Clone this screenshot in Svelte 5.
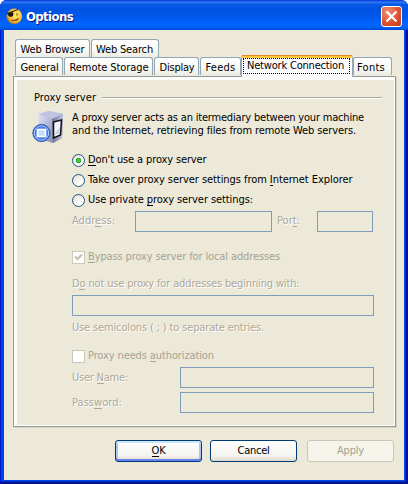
<script>
  // Tracks a label so that it fills the given number of pixels.
  function fit(node, width) {
    const natural = node.getBoundingClientRect().width;
    const count = node.textContent.length;
    node.style.letterSpacing = `${(width - natural) / count}px`;
  }

  const upperTabs = [
    { text: 'Web Browser', box: 75, w: 64 },
    { text: 'Web Search', box: 68, w: 57 }
  ];
  const lowerTabs = [
    { text: 'General', box: 48, w: 38 },
    { text: 'Remote Storage', box: 89, w: 79 },
    { text: 'Display', box: 45, w: 35 },
    { text: 'Feeds', box: 41, w: 30 },
    { text: 'Network Connection', box: 112, w: 97, active: true },
    { text: 'Fonts', box: 39, w: 28 }
  ];
  const modes = [
    { pre: '', key: 'D', post: "on't use a proxy server", w: 118.5, on: true },
    { pre: 'Take over proxy server settings from ', key: 'I', post: 'nternet Explorer', w: 264.5 },
    { pre: 'Use private ', key: 'p', post: 'roxy server settings:', w: 165 }
  ];
  const buttons = [
    { pre: '', key: 'O', post: 'K', w: 14, kind: 'default' },
    { pre: 'Cancel', key: '', post: '', w: 32, kind: '' },
    { pre: 'Apply', key: '', post: '', w: 27, kind: 'off' }
  ];
</script>

{#snippet label(pre, key, post, w)}
  <span class="t" use:fit={w}>{pre}{#if key}<u>{key}</u>{/if}{post}</span>
{/snippet}

<div class="window">
  <header>
    <svg class="logo" width="17" height="17" viewBox="0 0 17 17">
      <defs>
        <radialGradient id="gold" cx=".6" cy=".4" r=".65">
          <stop offset="0" stop-color="#ffe878" /><stop offset=".65" stop-color="#f9c03a" /><stop offset="1" stop-color="#b96a10" />
        </radialGradient>
      </defs>
      <circle cx="8.3" cy="8.3" r="7.8" fill="url(#gold)" />
      <path d="M1 5.500 12 1.500" stroke="#21180a" stroke-width="1" fill="none" />
      <path d="M1.500 5.500 6.500 4l1 1.500-.5 2.500-2 1-2.500-1z" fill="#21180a" />
      <path d="M11 5.500v2M5.500 12q4 1.500 7-1.500" stroke="#7a4708" stroke-width="1.2" fill="none" />
    </svg>
    <span class="title" use:fit={47}>Options</span>
    <button class="close" aria-label="Close">
      <svg width="21" height="21" viewBox="0 0 21 21"><path d="m5.500 5.500 10 10m0-10-10 10" stroke="#fff" stroke-width="2.2" /></svg>
    </button>
  </header>

  <main>
    <div class="tabs upper">
      {#each upperTabs as tab}
        <div class="tab" style:width="{tab.box}px">{@render label(tab.text, '', '', tab.w)}</div>
      {/each}
    </div>
    <div class="tabs lower">
      {#each lowerTabs as tab}
        <div class="tab" class:active={tab.active} style:width="{tab.box}px">{@render label(tab.text, '', '', tab.w)}</div>
      {/each}
    </div>

    <section class="panel">
      <div class="legend">{@render label('Proxy server', '', '', 62)}<i></i></div>
      <div class="intro">
        <svg width="33" height="33" viewBox="0 0 33 33">
          <defs>
            <linearGradient id="case" x1="0" x2="1" y2=".6"><stop stop-color="#e8eafa" /><stop offset="1" stop-color="#7c82a8" /></linearGradient>
            <linearGradient id="side" x1="0" x2="1"><stop stop-color="#6c7196" /><stop offset="1" stop-color="#c4c8de" /></linearGradient>
            <radialGradient id="ball"><stop stop-color="#86b4ff" /><stop offset=".8" stop-color="#3b72df" /><stop offset="1" stop-color="#2552b4" /></radialGradient>
          </defs>
          <path d="M6 3 17 0l14 3-1 24-9 5-14-4z" fill="url(#case)" />
          <path d="m6 3 11-3 14 3-11 5z" fill="#c1c4df" />
          <path d="m20 8 11-5-1 24-9 5z" fill="url(#side)" />
          <path d="m21.500 11 8-2-1 15-7 3z" fill="#f5f6fb" stroke="#15161e" stroke-width="1.6" />
          <path d="m22.500 24 5-8v6z" fill="#c7cad9" />
          <circle cx="9.500" cy="22" r="8.600" fill="url(#ball)" stroke="#2c5dbc" />
          <circle cx="9.500" cy="22" r="7.200" fill="none" stroke="#b9d3ff" />
          <path d="M5.500 18.500h8v7h-8z" fill="#c9dcfc" stroke="#fff" stroke-width="1.6" />
        </svg>
        <div>
          {@render label('A proxy server acts as an itermediary between your machine', '', '', 292)}
          {@render label('and the Internet, retrieving files from remote Web servers.', '', '', 284)}
        </div>
      </div>

      <div class="form">
        {#each modes as mode}
          <div class="choice">
            <span class="radio" class:on={mode.on}></span>
            {@render label(mode.pre, mode.key, mode.post, mode.w)}
          </div>
        {/each}
        <div class="row address">
          <div class="cap a">{@render label('Addr', 'e', 'ss:', 43)}</div><div class="input host"></div>
          <div class="cap p">{@render label('Por', 't', ':', 23)}</div><div class="input port"></div>
        </div>
        <div class="choice check bypass">
          <span class="box"><svg width="11" height="11" viewBox="0 0 11 11"><path d="M2 4.500 4.500 7 9 2.500" stroke="#c6c5b6" stroke-width="2.400" fill="none" /></svg></span>
          {@render label('', 'B', 'ypass proxy server for local addresses', 192)}
        </div>
        <div class="note">{@render label('D', 'o', ' not use proxy for addresses beginning with:', 227.5)}</div>
        <div class="input list"></div>
        <div class="note hint">{@render label('Use semicolons ( ; ) to separate entries.', '', '', 192)}</div>
        <div class="choice check auth">
          <span class="box"></span>
          {@render label('Proxy needs ', 'a', 'uthorization', 126)}
        </div>
        <div class="row"><div class="cap long">{@render label('User ', 'N', 'ame:', 56)}</div><div class="input cred"></div></div>
        <div class="row last"><div class="cap long">{@render label('Pass', 'w', 'ord:', 50)}</div><div class="input cred"></div></div>
      </div>
    </section>

    <footer>
      {#each buttons as b}
        <button class="btn {b.kind}">{@render label(b.pre, b.key, b.post, b.w)}</button>
      {/each}
    </footer>
  </main>
</div>

<style>
  :global(body) { background: #fff; }
  .window {
    box-sizing: border-box; width: 408px; height: 484px; padding: 0 4px 4px;
    border-radius: 7px 7px 0 0;
    background: #0046e6; box-shadow: inset 1px 0 #0019cf, inset -2px -2px #00138c, inset -3px -3px #0031cc;
    font: 11px/14px "DejaVu Sans Condensed", "DejaVu Sans", sans-serif; font-stretch: condensed; color: #000;
    overflow: hidden;
  }
  header {
    display: flex; align-items: center; box-sizing: border-box; height: 30px; margin: 0 -4px; padding: 2px 6px 0;
    background: linear-gradient(#0831d9 0, #2b7bf5 7%, #0a58e6 15%, #0054e3 30%, #0058ee 60%, #0066ff 80%, #0064fb 90%, #0046d0 100%);
  }
  .title { margin: 2px 0 0 3px; font: bold 13px/16px "DejaVu Sans Condensed", "DejaVu Sans", sans-serif; font-stretch: condensed; color: #fff; text-shadow: 1px 1px #0f1089; white-space: nowrap; }
  .close { width: 21px; height: 21px; margin-left: auto; padding: 0; border: 1px solid #fff; border-radius: 3px; background: radial-gradient(circle at 30% 25%, #ee9277, #e0522f 55%, #c13a15); }
  .close svg { display: block; margin: -1px; }
  main { height: 450px; background: #ece9d8; display: flow-root; }
  .t { display: block; width: max-content; white-space: pre; }
  .t u { text-decoration: none; background: linear-gradient(currentColor, currentColor) 0 100% / 100% 1px no-repeat; }
  .tabs { display: flex; margin-left: 11px; }
  .upper { margin-top: 9px; gap: 1px; }
  .lower { gap: 1px; height: 19px; margin-right: 8px; }
  .tab { box-sizing: border-box; flex: none; height: 18px; padding: 3px 0 0 4.5px; border: 1px solid #91a7b4; border-bottom: 0; border-radius: 3px 3px 0 0; background: linear-gradient(#fff, #f8f8f4 60%, #ededE5); }
  .tab:last-child { padding-left: 4px; }
  .lower .tab:last-child { padding-left: 3px; }
  .tab.active { position: relative; height: 22px; margin: -2px -1px 0 -1px; padding: 1px 0 0 5px; border-top: 3px solid #ffc73c; background: #fcfcfe; }
  .tab.active::before { content: ''; position: absolute; inset: 0 2px 3px 1px; border: 1px dotted #000; }
  .tab.active::after { content: ''; position: absolute; left: 0; right: 0; top: -3px; height: 1px; background: #e68b2c; }
  .panel { box-sizing: border-box; width: 383px; height: 351px; margin-left: 9px; padding: 14px 0 0 17px; border: 1px solid #919b9c; box-shadow: inset 3px 3px #fcfcfb, inset -1px -1px #fcfcfb, 1px 1px #d6d3c3; }
  .legend { display: flex; align-items: flex-start; margin-left: 3px; }
  .legend i { width: 280px; height: 1px; margin: 6px 0 0 6px; background: #aca899; border-bottom: 1px solid #fff; }
  .intro { display: flex; margin-top: 6px; margin-left: 1px; gap: 7px; }
  .intro div .t { height: 13px; line-height: 14px; }
  .form { margin-left: 41px; margin-top: 9px; }
  .choice { display: flex; align-items: center; gap: 3px; height: 14px; margin-bottom: 6px; }
  .radio { box-sizing: border-box; width: 13px; height: 13px; border: 1px solid #1d5281; border-radius: 50%; background: linear-gradient(135deg, #dcdcd7, #fff 70%); }
  .radio.on { background: radial-gradient(circle at 50% 50%, #43cc3f 0 1.2px, #21a121 2.4px, transparent 3px), linear-gradient(135deg, #dcdcd7, #fff 70%); }
  .row { display: flex; align-items: center; height: 21px; margin-bottom: 4px; }
  .address { margin-top: -2px; }
  .address .t { margin-top: -2px; }
  .cap, .note { color: #aca899; text-shadow: 1px 1px #fff; }
  .a { width: 63px; }
  .p { width: 40px; margin-left: 5px; }
  .long { width: 108px; }
  .input { box-sizing: border-box; height: 21px; border: 1px solid #7f9db9; }
  .host { width: 137px; }
  .port { width: 56px; }
  .list { width: 302px; }
  .cred { width: 194px; }
  .check { color: #a5a292; }
  .box { box-sizing: border-box; width: 13px; height: 13px; border: 1px solid #cac8bb; background: #fff; }
  .box svg { display: block; }
  .bypass { margin-top: 18px; margin-bottom: 13px; }
  .note { margin-bottom: 4px; }
  .hint { margin: 5px 0 0; }
  .auth { margin-top: 14px; margin-bottom: 4px; }
  footer { display: flex; margin: 13px 0 0 111px; }
  .btn { box-sizing: border-box; display: flex; justify-content: center; width: 87px; height: 22px; padding: 3px 0 0; border: 1px solid #003c74; border-radius: 3px; background: linear-gradient(#fff, #f4f3ee 75%, #dcd8cc); font: inherit; color: #000; margin-right: 8px; }
  .btn.default { box-shadow: inset 0 2px #cee7ff, inset 0 -2px #6982ee, inset 2px 0 #a9c4f5, inset -2px 0 #a9c4f5; }
  .btn:nth-child(2) { margin-right: 10px; }
  .btn.off { border-color: #c9c7ba; background: #f5f4ea; color: #a1a192; }
</style>
